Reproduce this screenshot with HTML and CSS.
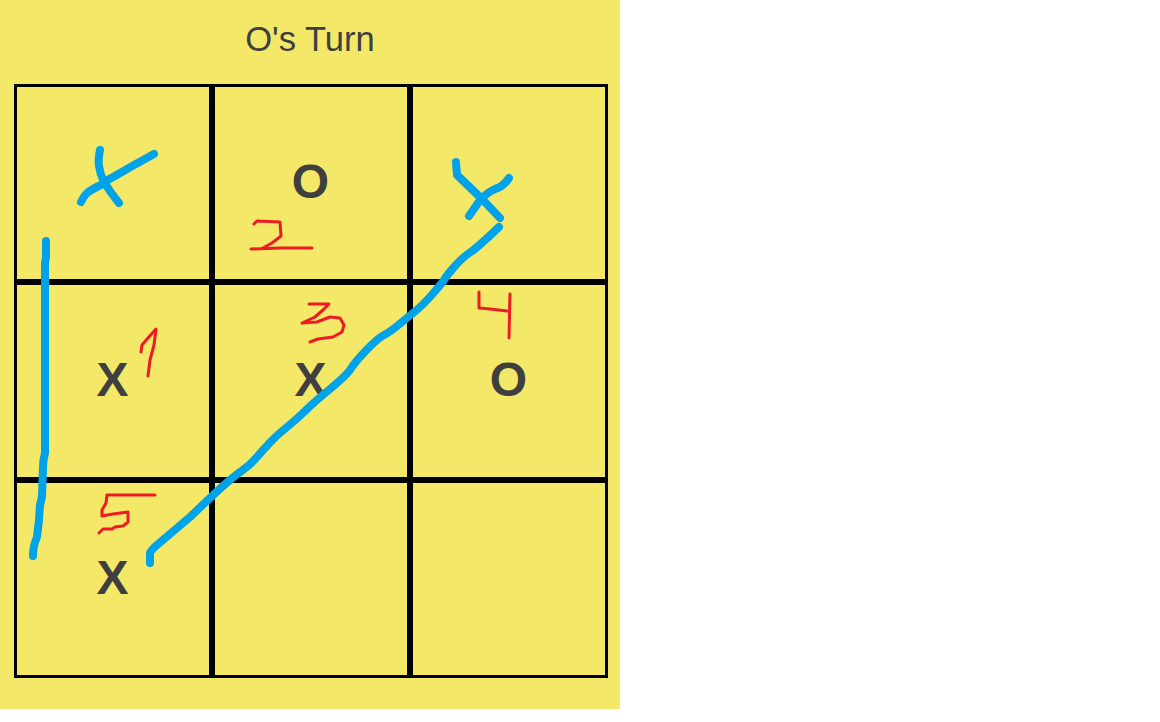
FILE: index.html
```html
<!DOCTYPE html>
<html lang="en">
<head>
    <meta charset="UTF-8">
    <meta name="viewport" content="width=device-width, initial-scale=1.0">
    <title>Tic Tac Toe</title>
    <link rel="stylesheet" href="styles.css">
</head>
<body>
    <div class="game">
        <h1 class="turn">O's Turn</h1>

        <!-- Board -->
        <div class="board">
            <div class="cell"></div>
            <div class="cell">O</div>
            <div class="cell"></div>
            <div class="cell">X</div>
            <div class="cell">X</div>
            <div class="cell">O</div>
            <div class="cell">X</div>
            <div class="cell"></div>
            <div class="cell"></div>
        </div>

        <!-- Pen marks drawn over the board -->
        <svg class="marks" width="620" height="709" viewBox="0 0 620 709">
            <g class="pen-blue">
                <path d="M100 150 Q98 160 99 166 Q100 174 104 182 Q110 192 119 203"/>
                <path d="M154 154 L134 165 L115 176 Q108 179 103 184 Q92 189 87 193 Q83 197 81 202"/>
                <path d="M46 241 L46 258 L45 262 L45 453 Q43 460 43 467 L42 497 L40 505 L39 520 L37 537 Q33 546 33 556"/>
                <path d="M150 563 L150 553 Q150 551 157 545 L190 517 Q213 495 223 486 Q233 477 241.5 471 Q250 465 256.5 457.5 Q263 450 270 442.5 Q277 435 287 427 Q297 419 305 411 Q313 403 330 389 Q347 375 351 368.5 Q355 362 366.5 350 Q378 338 384 335 Q390 332 399 324.5 Q408 317 415.5 311 Q423 305 433 293.5 Q443 282 445 278.5 Q447 275 455 266 Q463 257 470 252.5 Q477 248 499 227"/>
                <path d="M456 162 L457 175 L482 199 L500 218"/>
                <path d="M509 178 Q505 184 500 187 Q492 190 488 193 Q482 197 478 203 L469 216"/>
            </g>
            <g class="pen-red">
                <path d="M254 224 L257 221 L280 222 L281 236 L272 243 L263 248"/>
                <path d="M251 249 L280 248 L312 248"/>
                <path d="M141 352 L142 345 L148 338 L156 329 L154 345 L150 360 L148 376"/>
                <path d="M155 495 L107 495 L106 503 L102 510 L102 516 L113 514 L128 512 L128 522 L123 526 L115 527 L112 529 L103 529 L99 533"/>
                <path d="M309 304 L329 304 L323 310 L315 317 L302 323 L317 322 L330 317 L340 318 L344 325 L342 332 L333 337 L318 339 L310 342"/>
                <path d="M479 292 L479 308 L490 309 L507 311"/>
                <path d="M510 294 L509 338"/>
            </g>
        </svg>
    </div>
</body>
</html>
```

FILE: styles.css
```css
body {
    margin: 0;
    font-family: "Liberation Sans", Arial, sans-serif;
    background-color: #fff;
}
.game {
    position: relative;
    width: 620px;
    height: 709px;
    background-color: #F4E869;
    color: #3F3F3F;
    overflow: hidden;
}
.turn {
    margin: 0;
    height: 84px;
    padding-top: 20px;
    box-sizing: border-box;
    font-size: 34.6px;
    line-height: 39px;
    font-weight: normal;
    text-align: center;
}
.board {
    display: grid;
    grid-template-columns: repeat(3, 198px);
    grid-template-rows: repeat(3, 198px);
    margin-left: 14px;
}
.cell {
    display: flex;
    align-items: center;
    justify-content: center;
    border: 3px solid #000;
    padding: 0 1px 4px 0;
    font-size: 48px;
    font-weight: bold;
}
.marks {
    position: absolute;
    left: 0;
    top: 0;
}
.marks path {
    fill: none;
    stroke-linecap: round;
    stroke-linejoin: round;
}
.pen-blue path {
    stroke: #00A2E8;
    stroke-width: 8;
}
.pen-red path {
    stroke: #ED1C24;
    stroke-width: 3;
}
```
